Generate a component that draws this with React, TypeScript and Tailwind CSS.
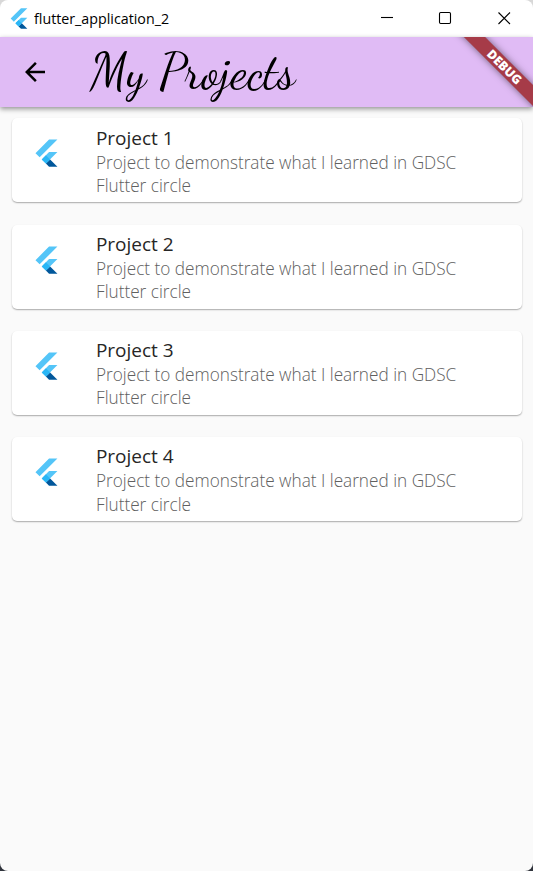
import React from "react";

function FlutterLogo({ className }: { className: string }) {
  return (
    <svg viewBox="0 0 166 202" className={className} aria-hidden="true">
      <path fill="#54c5f8" d="M37.7 128.9 9.8 101 100.4 10.4h55.8zM156.2 94h-55.8l-48.8 48.8 27.9 27.9z" />
      <path fill="#01579b" d="m79.5 170.7 20.9 20.9h55.8l-48.8-48.8z" />
      <path fill="#29b6f6" d="m51.6 142.8 27.9-27.9 27.9 27.9-27.9 27.9z" />
    </svg>
  );
}

function TitleBar() {
  return (
    <header className="flex h-[37px] shrink-0 items-center rounded-t-[8px] bg-white pl-[9px]">
      <FlutterLogo className="h-[23px] w-[20px]" />
      <span className="-mt-[2px] ml-[5px] origin-left scale-x-[0.95] whitespace-nowrap text-[15px] leading-[20px] text-black">
        flutter_application_2
      </span>
      <svg className="ml-auto h-[37px] w-[175px] shrink-0" viewBox="0 0 175 37" fill="none" stroke="#000" strokeWidth="1.1" aria-hidden="true">
        <path d="M23 17.5h12" />
        <rect x="81.5" y="12.5" width="11" height="11" rx="1.2" />
        <path d="m140.5 12.5 11.5 11.5m0-11.5L140.5 24" />
      </svg>
    </header>
  );
}

function AppBar() {
  return (
    <div className="relative z-10 flex h-[70px] shrink-0 items-center bg-[#e0bbf5] pl-[20px] shadow-[0_2px_5px_rgba(0,0,0,0.42)]">
      <svg className="h-[30px] w-[30px]" viewBox="0 0 24 24" aria-hidden="true">
        <path d="M20 11H7.83l5.59-5.59L12 4l-8 8 8 8 1.41-1.41L7.83 13H20z" />
      </svg>
      <h1 className="ml-[40px] whitespace-nowrap font-['Dancing_Script',cursive] text-[50px] leading-[70px] font-normal text-black">
        My Projects
      </h1>
      <div className="absolute top-0 right-0 h-[70px] w-[90px] overflow-hidden">
        <div className="absolute top-[21.5px] left-[-9.5px] flex h-[15px] w-[140px] rotate-45 items-center justify-center bg-[#a63b48] shadow-[0_0_7px_rgba(0,0,0,0.5)]">
          <span className="pl-[1px] text-[12.5px] leading-[15px] font-extrabold text-white">DEBUG</span>
        </div>
      </div>
    </div>
  );
}

function ProjectCard({ title }: { title: string }) {
  return (
    <li className="flex h-[84px] rounded-[5px] bg-white pl-[22.5px] shadow-[0_1px_1.5px_rgba(0,0,0,0.32)]">
      <FlutterLogo className="mt-[20px] h-[30.3px] w-[24.9px] shrink-0" />
      <div className="ml-[37px] pt-[7.7px]">
        <h2 className="origin-left whitespace-nowrap text-[19px] leading-[24px] font-normal text-[#262626]">{title}</h2>
        <p className="mt-[0.4px] origin-left scale-x-[0.982] whitespace-nowrap text-[17.5px] leading-[23.7px] font-light text-[#606060]">
          Project to demonstrate what I learned in GDSC
          <br />
          Flutter circle
        </p>
      </div>
    </li>
  );
}

export default function App() {
  return (
    <div className="h-[871px] w-[533px] overflow-hidden bg-[#30343c] font-['Segoe_UI','Open_Sans',sans-serif]">
      <div className="flex h-full flex-col overflow-hidden rounded-b-[8px] bg-[#fafafa]">
        <div className="flex shrink-0 flex-col bg-[#d8d8d8]">
          <TitleBar />
          <AppBar />
        </div>
        <ul className="flex flex-col gap-[22.1px] px-[11.5px] pt-[11.45px]">
          {["Project 1", "Project 2", "Project 3", "Project 4"].map((title) => (
            <ProjectCard key={title} title={title} />
          ))}
        </ul>
      </div>
    </div>
  );
}
